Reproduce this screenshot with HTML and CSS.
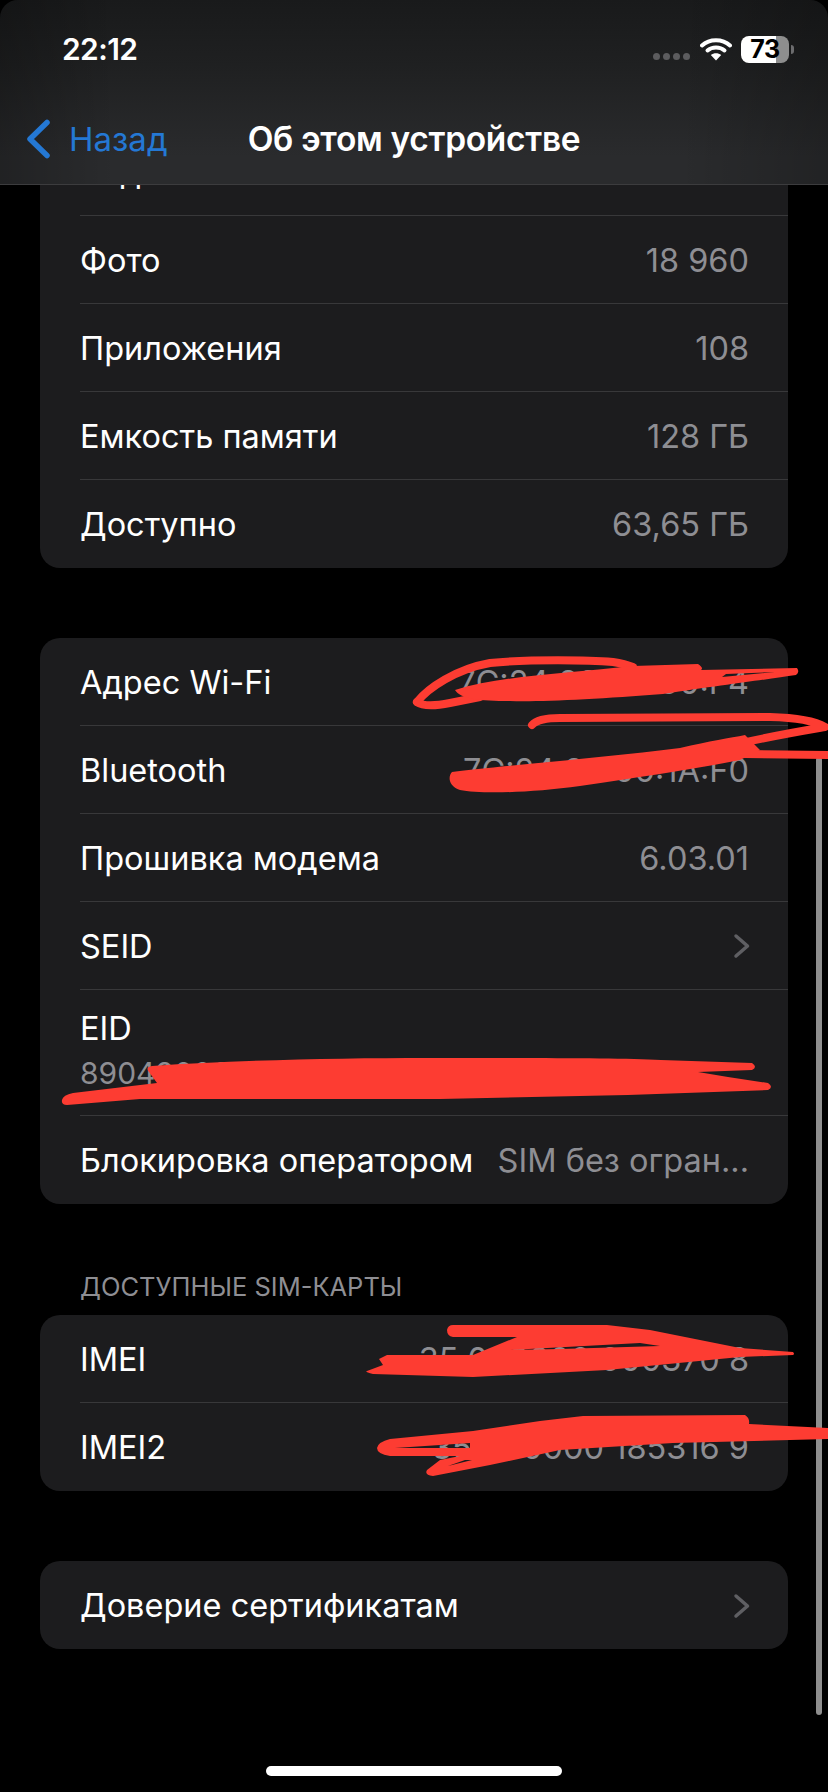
FILE: index.html
```html
<!DOCTYPE html>
<html lang="ru">
<head>
    <meta charset="UTF-8">
    <meta name="viewport" content="width=device-width, initial-scale=1.0">
    <title>Об этом устройстве</title>
    <link rel="stylesheet" href="styles.css">
</head>
<body>
    <div class="screen">
        <!-- Шапка поверх прокрутки -->
        <header class="top-bar">
            <div class="status-bar">
                <span class="time">22:12</span>
                <div class="status-icons">
                    <div class="signal-dots"><i></i><i></i><i></i><i></i></div>
                    <svg class="wifi" width="32" height="24" viewBox="0 0 32 24">
                        <path d="M2 8.5C9.5 1.5 22.5 1.500 30 8.500" fill="none" stroke="#fff" stroke-width="4" stroke-linecap="round"/>
                        <path d="M7.500 13.500C12 9.500 20 9.500 24.500 13.500" fill="none" stroke="#fff" stroke-width="4" stroke-linecap="round"/>
                        <path d="M16 23.500L10.800 18C13.800 15.700 18.200 15.700 21.200 18Z" fill="#fff"/>
                    </svg>
                    <div class="battery">
                        <div class="battery-body"><span>73</span></div>
                        <div class="battery-nub"></div>
                    </div>
                </div>
            </div>
            <nav class="nav-bar">
                <a class="back" href="#">
                    <svg width="27" height="40" viewBox="0 0 27 40">
                        <path d="M23 3.500L6 20L23 36.500" fill="none" stroke="#2478d4" stroke-width="5.500" stroke-linecap="round" stroke-linejoin="round"/>
                    </svg>
                    <span>Назад</span>
                </a>
                <h1>Об этом устройстве</h1>
                <div></div>
            </nav>
        </header>

        <main class="content">
            <section class="card">
                <div class="row"><span>Видео</span><span class="value">300</span></div>
                <div class="row"><span>Фото</span><span class="value">18 960</span></div>
                <div class="row"><span>Приложения</span><span class="value">108</span></div>
                <div class="row"><span>Емкость памяти</span><span class="value">128 ГБ</span></div>
                <div class="row"><span>Доступно</span><span class="value">63,65 ГБ</span></div>
            </section>

            <section class="card">
                <div class="row"><span>Адрес Wi-Fi</span><span class="value">7C:24:99:00:00:F4</span></div>
                <div class="row"><span>Bluetooth</span><span class="value">7C:24:99:00:1A:F0</span></div>
                <div class="row"><span>Прошивка модема</span><span class="value">6.03.01</span></div>
                <div class="row">
                    <span>SEID</span>
                    <svg class="chevron" width="18" height="26" viewBox="0 0 18 26">
                        <path d="M3 3L14.500 13L3 23" fill="none" stroke="#5f5f63" stroke-width="3.500" stroke-linecap="round" stroke-linejoin="round"/>
                    </svg>
                </div>
                <div class="row row-stacked">
                    <span>EID</span>
                    <span class="value">89049000000000000000000000000000</span>
                </div>
                <div class="row"><span>Блокировка оператором</span><span class="value">SIM без огран...</span></div>
            </section>

            <h2 class="section-title">ДОСТУПНЫЕ SIM-КАРТЫ</h2>
            <section class="card card-titled">
                <div class="row"><span>IMEI</span><span class="value">35 000000 000370 8</span></div>
                <div class="row"><span>IMEI2</span><span class="value">35 000000 185316 9</span></div>
            </section>

            <section class="card">
                <div class="row">
                    <span>Доверие сертификатам</span>
                    <svg class="chevron" width="18" height="26" viewBox="0 0 18 26">
                        <path d="M3 3L14.500 13L3 23" fill="none" stroke="#5f5f63" stroke-width="3.500" stroke-linecap="round" stroke-linejoin="round"/>
                    </svg>
                </div>
            </section>
        </main>

        <div class="scrollbar"></div>
        <div class="home-indicator"></div>

        <!-- Красные зачёркивания от руки -->
        <svg class="scribbles" width="828" height="1792" viewBox="0 0 828 1792">
            <g fill="none" stroke="#fd3c32" stroke-width="8" stroke-linecap="round" stroke-linejoin="round">
                <path d="M417 702C428 688 456 669 490 663C530 659 590 660 613 662Q625 664 633 667"/>
                <path d="M417 702Q425 708 450 703L480 697"/>
                <path d="M532 725Q538 718 560 718L770 717Q810 718 825 727C790 733 760 738 720 748"/>
                <path d="M828 755L745 754"/>
            </g>
            <g fill="#fd3c32" fill-rule="evenodd">
                <!-- Wi-Fi -->
                <path d="M455 690C500 676 560 674 633 666L698 664Q704 668 701 670L797 668Q800 672 796 675C770 679 730 684 663 694C600 699 540 702 510 701C480 701 460 699 455 690Z M722 677L775 672L726 674Z"/>
                <!-- Bluetooth -->
                <path d="M452 772C500 766 600 758 680 748C710 741 730 738 745 735L760 750L740 760C690 770 640 777 580 786C530 793 480 794 460 790C448 786 448 776 452 772Z"/>
                <!-- EID -->
                <path d="M62 1100Q63 1095 73 1093L157 1083L149 1072Q145 1067 152 1066C240 1060 340 1058 428 1058C540 1058 620 1058 661 1060L752 1063Q758 1067 752 1070L698 1072L728 1077L768 1083Q774 1087 768 1090L628 1095L440 1099H140L67 1105Q61 1105 62 1100Z"/>
                <!-- IMEI -->
                <path d="M447 1330Q448 1325 453 1325H607L650 1330L740 1348L793 1352Q795 1354 793 1355L740 1357L607 1370L473 1377L373 1374Q364 1372 367 1371L383 1365L379 1359L387 1355H473L517 1337H453Q447 1336 447 1330Z M510 1350L640 1343L660 1346L560 1349Z"/>
                <!-- IMEI2 -->
                <path d="M377 1448Q378 1442 390 1439L473 1431L540 1421L583 1416L745 1415Q750 1418 749 1424L828 1428V1439L673 1443L560 1450L490 1465L433 1476Q424 1475 427 1470L440 1460L460 1456H390Q377 1454 377 1448Z M395 1448L470 1443L470 1448Z M448 1466L472 1460L465 1460Z"/>
            </g>
        </svg>
    </div>
</body>
</html>
```

FILE: styles.css
```css
* {
    margin: 0;
    padding: 0;
    box-sizing: border-box;
}

body {
    background-color: #000;
    color: #fff;
    font-family: 'Inter', 'Liberation Sans', sans-serif;
}

.screen {
    position: relative;
    width: 828px;
    height: 1792px;
    overflow: hidden;
    background-color: #000;
}

/* Шапка */
.top-bar {
    position: absolute;
    top: 0;
    left: 0;
    width: 100%;
    height: 185px;
    z-index: 10;
    background:
        linear-gradient(90deg, rgba(0, 0, 0, 0.22), rgba(0, 0, 0, 0) 14%, rgba(0, 0, 0, 0) 82%, rgba(0, 0, 0, 0.2)),
        linear-gradient(180deg, #191a1b 0%, #1f2021 35%, #2a2b2d 85%, #2a2b2d 100%);
    border-bottom: 1px solid #3c3c3e;
    border-radius: 18px 18px 0 0;
}

.status-bar {
    display: flex;
    justify-content: space-between;
    align-items: center;
    height: 50px;
    margin-top: 24px;
    padding: 0 34px 0 62px;
}

.time {
    font-size: 30px;
    font-weight: 600;
    letter-spacing: -0.6px;
}

.status-icons {
    display: flex;
    align-items: center;
    gap: 9px;
}

.signal-dots {
    display: flex;
    gap: 3px;
    margin-top: 14px;
    margin-right: 1px;
}

.signal-dots i {
    width: 7px;
    height: 7px;
    border-radius: 50%;
    background-color: #5c5c5e;
}

.battery {
    display: flex;
    align-items: center;
    gap: 2px;
}

.battery-body {
    width: 48px;
    height: 27px;
    border-radius: 8px;
    background: linear-gradient(90deg, #fff 73%, #8e8e8e 73%);
    display: flex;
    justify-content: center;
    align-items: center;
    color: #000;
    font-size: 25px;
    font-weight: 700;
    letter-spacing: -0.5px;
}

.battery-nub {
    width: 3px;
    height: 9px;
    border-radius: 0 3px 3px 0;
    background-color: #6c6c6e;
}

.nav-bar {
    display: grid;
    grid-template-columns: 1fr auto 1fr;
    align-items: center;
    height: 48px;
    margin-top: 41px;
    padding: 0 24px;
}

.back {
    display: flex;
    align-items: center;
    gap: 18px;
    color: #2478d4;
    text-decoration: none;
    font-size: 33px;
}

.nav-bar h1 {
    font-size: 33.5px;
    font-weight: 600;
    letter-spacing: -0.3px;
}

/* Список */
.content {
    padding: 128px 40px 0;
}

.card {
    background-color: #1c1c1e;
    border-radius: 20px;
    margin-bottom: 70px;
    font-size: 32.5px;
}

.row {
    display: flex;
    justify-content: space-between;
    align-items: center;
    gap: 24px;
    height: 88px;
    margin-left: 40px;
    padding: 1px 39px 0 0;
    border-bottom: 1px solid #38383a;
    white-space: nowrap;
}

.row:last-child {
    border-bottom: none;
}

.row .value {
    color: #8e8e93;
}

.row-stacked {
    flex-direction: column;
    align-items: flex-start;
    justify-content: flex-start;
    gap: 7px;
    height: 126px;
    padding-top: 19px;
}

.row-stacked .value {
    font-size: 30px;
}

.chevron {
    margin-right: -2px;
}

.section-title {
    margin: -3px 0 0 40px;
    height: 44px;
    font-size: 25.5px;
    font-weight: 400;
    color: #8e8e93;
}

/* Поверх содержимого */
.scrollbar {
    position: absolute;
    top: 757px;
    right: 6px;
    width: 6px;
    height: 958px;
    border-radius: 3px;
    background-color: #8e8e8e;
}

.home-indicator {
    position: absolute;
    left: 266px;
    bottom: 16px;
    width: 296px;
    height: 10px;
    border-radius: 5px;
    background-color: #fff;
}

.scribbles {
    position: absolute;
    top: 0;
    left: 0;
    z-index: 20;
}
```
